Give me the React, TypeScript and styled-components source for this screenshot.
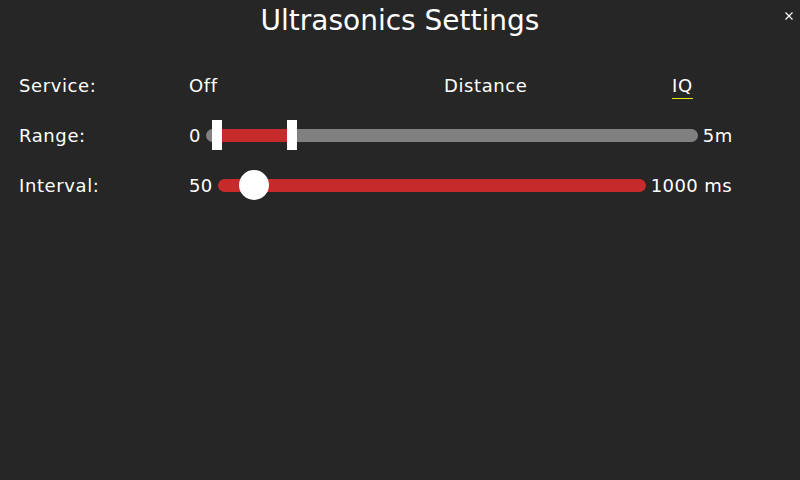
import React from 'react';
import styled, {createGlobalStyle} from 'styled-components';

const colors = {
    background: '#262626',
    text: '#ffffff',
    red: '#c62a2a',
    grey: '#808080',
    accent: '#e8e800',
};

const GlobalStyle = createGlobalStyle`
    html, body {
        margin: 0;
        padding: 0;
        background: ${colors.background};
    }
    body {
        font-family: "DejaVu Sans", "Noto Sans", sans-serif;
        color: ${colors.text};
    }
`

const Screen = styled.div`
    width: 800px;
    height: 480px;
    overflow: hidden;
    display: flex;
    flex-direction: column;
    background: ${colors.background};
`

const Header = styled.div`
    height: 40px;
    display: grid;
    grid-template-columns: 1fr auto 1fr;
    align-items: center;
`

const Title = styled.div`
    grid-column: 2;
    font-size: 28px;
    line-height: 40px;
    margin-top: 1px;
`

const CloseButton = styled.button`
    grid-column: 3;
    justify-self: end;
    align-self: start;
    margin: 12px 7px 0 0;
    padding: 0;
    width: 8px;
    height: 8px;
    border: none;
    background: transparent;
    cursor: pointer;
    display: flex;
`

const Form = styled.div`
    padding: 20px 0 0 19px;
    display: flex;
    flex-direction: column;
`

const Row = styled.div`
    height: 50px;
    display: grid;
    grid-template-columns: 170px 1fr;
    align-items: center;
`

const Label = styled.div`
    font-size: 18px;
    line-height: 21px;
    letter-spacing: 0.6px;
`

const Options = styled.div`
    display: grid;
    grid-template-columns: 255px 228px auto;
    align-items: center;
`

const Option = styled.div<{selected?: boolean}>`
    position: relative;
    justify-self: start;
    font-size: 18px;
    line-height: 21px;
    letter-spacing: 0.6px;
    margin-top: 4px;
    padding-bottom: 4px;
    cursor: pointer;
    &::after {
        content: '';
        position: absolute;
        left: 0;
        right: 0;
        bottom: 1px;
        height: 1px;
        background: ${props => props.selected ? colors.accent : 'transparent'};
    }
`

const SliderLine = styled.div`
    display: flex;
    align-items: center;
`

const EndText = styled.div<{gap: number}>`
    font-size: 18px;
    line-height: 21px;
    letter-spacing: 0.4px;
    margin: 0 ${props => props.gap}px;
    &:first-child {
        margin-left: 0;
    }
    white-space: pre;
`

const Track = styled.div<{width: number, fill?: boolean}>`
    position: relative;
    width: ${props => props.width}px;
    height: 13px;
    border-radius: 7px;
    background: ${props => props.fill ? colors.red : colors.grey};
`

const RangeFill = styled.div`
    position: absolute;
    top: 0;
    bottom: 0;
    background: ${colors.red};
`

const BarHandle = styled.div`
    position: absolute;
    top: 50%;
    width: 10px;
    height: 30px;
    margin-left: -5px;
    transform: translateY(-50%);
    background: #ffffff;
`

const RoundHandle = styled.div`
    position: absolute;
    top: 50%;
    width: 30px;
    height: 30px;
    margin-left: -15px;
    border-radius: 50%;
    transform: translateY(-50%);
    background: #ffffff;
`

const CloseIcon = () => (
    <svg width="8" height="8" viewBox="0 0 8 8">
        <path d="M0.5 0.5 L7.5 7.5 M7.5 0.5 L0.5 7.5" stroke="#ffffff" strokeWidth="1.2" />
    </svg>
)

interface RangeProps {
    width: number
    inset: number
    min: number
    max: number
    low: number
    high: number
}

const RangeSlider = (props: RangeProps) => {
    const {width, inset, min, max, low, high} = props
    const pos = (v: number) => inset + (v - min) / (max - min) * (width - inset * 2)
    const a = pos(low)
    const b = pos(high)
    return (
        <Track width={width}>
            <RangeFill style={{left: a, width: b - a}} />
            <BarHandle style={{left: a}} />
            <BarHandle style={{left: b}} />
        </Track>
    )
}

interface SliderProps {
    width: number
    inset: number
    min: number
    max: number
    value: number
}

const Slider = (props: SliderProps) => {
    const {width, inset, min, max, value} = props
    const left = inset + (value - min) / (max - min) * (width - inset * 2)
    return (
        <Track width={width} fill>
            <RoundHandle style={{left}} />
        </Track>
    )
}

const App = () => {
    return (
        <Screen>
            <GlobalStyle />
            <Header>
                <Title>Ultrasonics Settings</Title>
                <CloseButton>
                    <CloseIcon />
                </CloseButton>
            </Header>
            <Form>
                <Row>
                    <Label>Service:</Label>
                    <Options>
                        <Option>Off</Option>
                        <Option>Distance</Option>
                        <Option selected>IQ</Option>
                    </Options>
                </Row>
                <Row>
                    <Label>Range:</Label>
                    <SliderLine>
                        <EndText gap={5}>0</EndText>
                        <RangeSlider width={492} inset={11} min={0} max={5} low={0} high={0.8} />
                        <EndText gap={5}>5m</EndText>
                    </SliderLine>
                </Row>
                <Row>
                    <Label>Interval:</Label>
                    <SliderLine>
                        <EndText gap={5}>50</EndText>
                        <Slider width={428} inset={15} min={50} max={1000} value={100} />
                        <EndText gap={5}>1000 ms</EndText>
                    </SliderLine>
                </Row>
            </Form>
        </Screen>
    )
}

export default App
